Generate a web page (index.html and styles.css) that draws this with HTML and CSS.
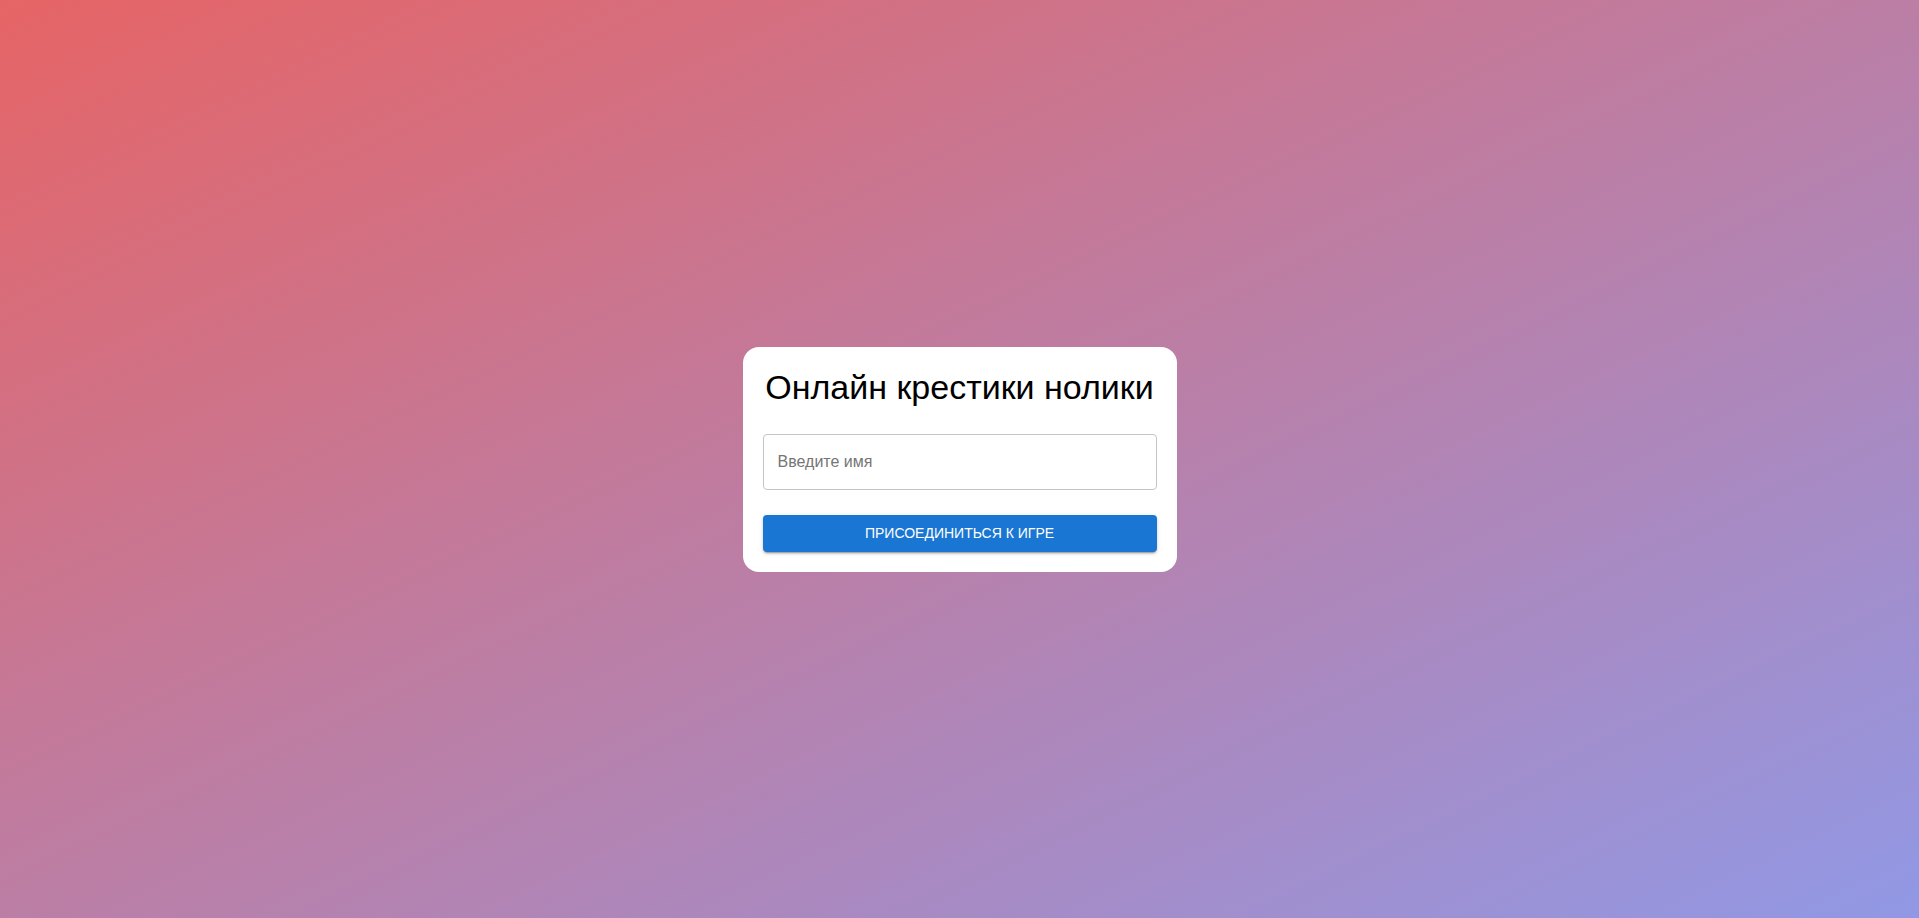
FILE: index.html
```html
<!DOCTYPE html>
<html lang="ru">
<head>
<meta charset="utf-8">
<meta name="viewport" content="width=device-width, initial-scale=1">
<title>Онлайн крестики нолики</title>
<link rel="stylesheet" href="styles.css">
</head>
<body>
<main class="page">
  <form class="card">
    <h1 class="title">Онлайн крестики нолики</h1>
    <input class="field" type="text" placeholder="Введите имя" aria-label="Введите имя">
    <button class="submit" type="submit">Присоединиться к игре</button>
  </form>
</main>
</body>
</html>
```

FILE: styles.css
```css
* { box-sizing: border-box; }

body {
  margin: 0;
  font-family: "Liberation Sans", Arial, sans-serif;
}

.page {
  display: flex;
  align-items: center;
  justify-content: center;
  min-height: 100vh;
  background: linear-gradient(to bottom right, #e66465, #9198e5);
}

.card {
  display: flex;
  flex-direction: column;
  width: 100%;
  max-width: 434px;
  padding: 20px;
  border-radius: 16px;
  background: #fff;
}

.title {
  margin: 0 0 27px;
  color: #000;
  font-size: 34px;
  font-weight: 400;
  line-height: 40px;
  text-align: center;
}

.field {
  width: 100%;
  height: 56px;
  margin-bottom: 25px;
  padding: 0 14px;
  border: 1px solid #c4c4c4;
  border-radius: 4px;
  background: #fff;
  color: #212121;
  font: inherit;
  font-size: 16px;
}

.field::placeholder { color: #757575; }

.submit {
  padding: 6px 16px;
  border: 0;
  border-radius: 4px;
  background: #1976d2;
  box-shadow: 0 3px 1px -2px rgba(0, 0, 0, 0.2), 0 2px 2px 0 rgba(0, 0, 0, 0.14), 0 1px 5px 0 rgba(0, 0, 0, 0.12);
  color: #fff;
  font: inherit;
  font-size: 14px;
  line-height: 25px;
  text-transform: uppercase;
  cursor: pointer;
}
```
